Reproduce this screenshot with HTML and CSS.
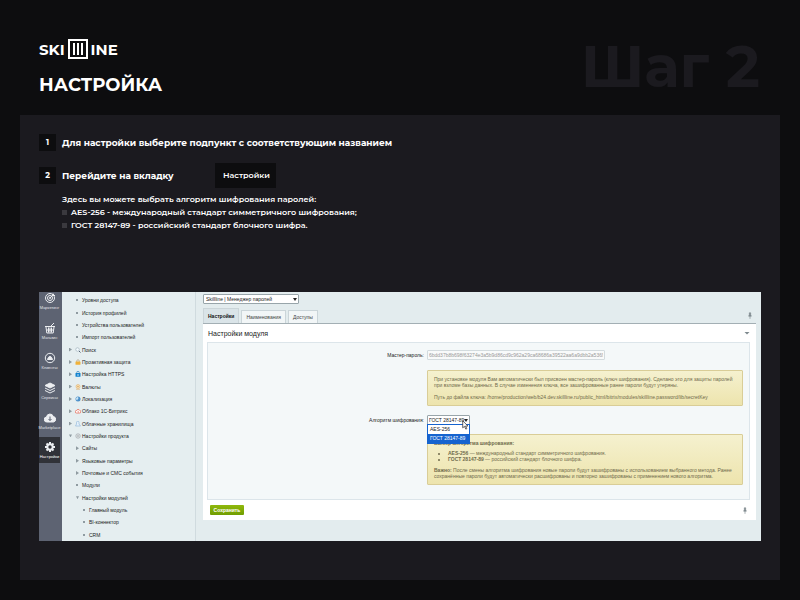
FILE: index.html
```html
<!DOCTYPE html>
<html lang="ru">
<head>
    <meta charset="UTF-8">
    <meta name="viewport" content="width=device-width, initial-scale=1.0">
    <title>Настройка</title>
    <link rel="stylesheet" href="styles.css">
</head>
<body>
    <header class="header">
        <div>
            <div class="logo">
                <span>SKI</span>
                <span class="logo-box"><i></i><i></i><i></i></span>
                <span>INE</span>
            </div>
            <h1>НАСТРОЙКА</h1>
        </div>
        <div class="step-title">Шаг 2</div>
    </header>

    <main class="panel">
        <div class="step">
            <span class="num">1</span>
            <h2>Для настройки выберите подпункт с соответствующим названием</h2>
        </div>
        <div class="step step-tab">
            <span class="num">2</span>
            <h2>Перейдите на вкладку</h2>
            <span class="tab-name">Настройки</span>
        </div>
        <div class="note">
            <p>Здесь вы можете выбрать алгоритм шифрования паролей:</p>
            <ul>
                <li>AES-256 - международный стандарт симметричного шифрования;</li>
                <li>ГОСТ 28147-89 - российский стандарт блочного шифра.</li>
            </ul>
        </div>

        <section class="admin">
            <nav class="rail">
                <a href="#">
                    <svg viewBox="0 0 12 12"><circle cx="6" cy="6" r="4.5"/><circle cx="6" cy="6" r="2.5"/><circle cx="6" cy="6" r="0.6"/><path d="M6 6l4-4M9 1.5v2h2"/></svg>
                    Маркетинг
                </a>
                <a href="#">
                    <svg viewBox="0 0 12 12"><path d="M1 4.5h10M2 5l.8 6h6.4l.8-6M4.5 5.5v5M6 5.5v5M7.5 5.5v5M2.5 8h7M7 4l3-3"/></svg>
                    Магазин
                </a>
                <a href="#">
                    <svg viewBox="0 0 12 12"><circle cx="6" cy="6" r="4.7"/><path class="fill" d="M3.5 7.5c0-1.5 1-1.5 1-1.5a1.5 1.5 0 1 1 3 0s1 0 1 1.5z"/></svg>
                    Клиенты
                </a>
                <a href="#">
                    <svg viewBox="0 0 12 12"><path class="fill" d="M6 1l5 2.5-5 2.5-5-2.5z"/><path d="M1 6l5 2.5 5-2.5M1 8.500l5 2.500 5-2.500"/></svg>
                    Сервисы
                </a>
                <a href="#">
                    <svg viewBox="0 0 12 12"><path class="fill" d="M3 10a2.500 2.500 0 0 1-.5-5 3.500 3.500 0 0 1 6.800-.5A2.800 2.800 0 0 1 9.500 10z"/><path class="dark" d="M6 4.500v4M4.500 7l1.500 1.500 1.500-1.500"/></svg>
                    Marketplace
                </a>
                <a href="#" class="active">
                    <svg viewBox="0 0 12 12"><circle cx="6" cy="6" r="2.7" stroke-width="2"/><path stroke-width="2" d="M6 1v2M6 9v2M1 6h2M9 6h2M2.500 2.500l1.300 1.300M8.200 8.200l1.300 1.300M9.500 2.500l-1.300 1.300M3.800 8.200l-1.300 1.300"/></svg>
                    Настройки
                </a>
            </nav>

            <ul class="tree">
                <li class="sub dot"><a href="#">Уровни доступа</a></li>
                <li class="sub dot"><a href="#">История профилей</a></li>
                <li class="sub dot"><a href="#">Устройства пользователей</a></li>
                <li class="sub dot"><a href="#">Импорт пользователей</a></li>
                <li class="closed"><svg viewBox="0 0 12 12"><circle cx="5" cy="5" r="3.5" fill="#f4fbff" stroke="#8b9cab"/><path d="M8 8l3 3" stroke="#526273" stroke-width="2"/></svg><a href="#">Поиск</a></li>
                <li class="closed"><svg viewBox="0 0 12 12"><path d="M3.5 6V4a2.5 2.5 0 0 1 5 0v2" fill="none" stroke="#b5a58c" stroke-width="1.5"/><rect x="1" y="5" width="10" height="6.5" rx="1" fill="#f0b13a"/></svg><a href="#">Проактивная защита</a></li>
                <li class="closed"><svg viewBox="0 0 12 12"><path d="M3.5 5V3a2.5 2.5 0 0 1 5 0v2" fill="none" stroke="#3d87bd" stroke-width="1.5"/><rect x="1" y="4" width="10" height="7.5" rx="1" fill="#1383cf"/><path d="M6 6v4" stroke="#fff" stroke-width="1.5"/></svg><a href="#">Настройка HTTPS</a></li>
                <li class="closed"><svg viewBox="0 0 12 12"><circle cx="6" cy="5" r="4" fill="#f9e6c0" stroke="#dca555"/><path d="M2 10.500h8M4 5h4M6 3v4" stroke="#d79b48"/></svg><a href="#">Валюты</a></li>
                <li class="closed"><svg viewBox="0 0 12 12"><circle cx="6" cy="6" r="5" fill="#4b8fc9"/><path d="M4 2c3 0 4 2 2 4s-2 3-2 3-2-2-2-4z" fill="#c9e4f4"/></svg><a href="#">Локализация</a></li>
                <li class="closed"><svg viewBox="0 0 12 12"><path d="M3 10a2.5 2.5 0 0 1 0-5 3.5 3.5 0 0 1 6.5 0A2.5 2.5 0 0 1 9 10z" fill="#fff" stroke="#e2614d" stroke-width="1.5"/><path d="M6 5v3h2" stroke="#e2614d" fill="none"/></svg><a href="#">Облако 1С-Битрикс</a></li>
                <li class="closed"><svg viewBox="0 0 12 12"><path d="M1 10l2-4V3a2.5 2.5 0 0 1 5 0v3l3 4z" fill="#e4f1fb" stroke="#7ba7d0"/></svg><a href="#">Облачные хранилища</a></li>
                <li class="open"><svg viewBox="0 0 12 12"><circle cx="6" cy="6" r="4.5" fill="#dfe3e5" stroke="#8d969b"/><circle cx="6" cy="6" r="1.5" fill="#fff" stroke="#8d969b"/></svg><a href="#">Настройки продукта</a></li>
                <li class="sub closed"><a href="#">Сайты</a></li>
                <li class="sub closed"><a href="#">Языковые параметры</a></li>
                <li class="sub closed"><a href="#">Почтовые и СМС события</a></li>
                <li class="sub dot"><a href="#">Модули</a></li>
                <li class="sub open"><a href="#">Настройки модулей</a></li>
                <li class="deep dot"><a href="#">Главный модуль</a></li>
                <li class="deep dot"><a href="#">BI-коннектор</a></li>
                <li class="deep dot"><a href="#">CRM</a></li>
            </ul>

            <div class="work">
                <select class="module-select" aria-label="Модуль">
                    <option>Skillline | Менеджер паролей</option>
                </select>
                <div class="tabs">
                    <button class="tab current">Настройки</button>
                    <button class="tab">Наименования</button>
                    <button class="tab">Доступы</button>
                    <svg class="pin" viewBox="0 0 6 10"><path d="M2 1h2v3l1 2h-4l1-2zM3 6v4"/></svg>
                </div>
                <div class="card">
                    <div class="card-head">
                        <h3>Настройки модуля</h3>
                        <span class="arrow"></span>
                    </div>
                    <form class="form">
                        <label for="master">Мастер-пароль:</label>
                        <input id="master" type="text" value="6bdd37b8b698f63274e3a5b9d86cd9c962a29ca68686a39522aa6a9dbb2a5369" disabled>
                        <div class="info info-key">
                            <p>При установке модуля Вам автоматически был присвоен мастер-пароль (ключ шифрования). Сделано это для защиты паролей при взломе базы данных. В случае изменения ключа, все зашифрованные ранее пароли будут утеряны.</p>
                            <p>Путь до файла ключа: /home/production/web/b24.dev.skillline.ru/public_html/bitrix/modules/skillline.password/lib/secretKey</p>
                        </div>
                        <label for="algo">Алгоритм шифрования:</label>
                        <div class="algo">
                            <select id="algo">
                                <option>AES-256</option>
                                <option selected>ГОСТ 28147-89</option>
                            </select>
                            <ul class="dropdown">
                                <li>AES-256</li>
                                <li class="picked">ГОСТ 28147-89</li>
                            </ul>
                            <svg class="cursor" viewBox="0 0 10 14"><path d="M1 1v10l2.5-2 2 4 1.5-1-2-3.5h3.5z" fill="#fff" stroke="#222"/></svg>
                        </div>
                        <div class="info info-algo">
                            <p><b>Выбор алгоритма шифрования:</b></p>
                            <ul>
                                <li><b>AES-256</b> — международный стандарт симметричного шифрования.</li>
                                <li><b>ГОСТ 28147-89</b> — российский стандарт блочного шифра.</li>
                            </ul>
                            <p><b>Важно:</b> После смены алгоритма шифрования новые пароли будут зашифрованы с использованием выбранного метода. Ранее сохранённые пароли будут автоматически расшифрованы и повторно зашифрованы с применением нового алгоритма.</p>
                        </div>
                    </form>
                    <div class="card-foot">
                        <button class="save">Сохранить</button>
                        <svg class="pin" viewBox="0 0 6 10"><path d="M2 1h2v3l1 2h-4l1-2zM3 6v4"/></svg>
                    </div>
                </div>
            </div>
        </section>
    </main>
</body>
</html>
```

FILE: styles.css
```css
* {
    box-sizing: border-box;
}
body {
    margin: 0;
    padding: 38px 20px 20px;
    min-height: 100vh;
    display: flex;
    flex-direction: column;
    background-color: #0d0d0f;
    color: #fff;
    font-family: Montserrat, Inter, sans-serif;
    font-weight: 700;
}
h1, h2, h3, p, ul {
    margin: 0;
    padding: 0;
}
ul {
    list-style: none;
}
a {
    color: inherit;
    text-decoration: none;
}
.header {
    display: flex;
    justify-content: space-between;
    height: 77px;
    padding: 0 20px 0 19px;
}
.logo {
    display: flex;
    align-items: center;
    gap: 3px;
    height: 22px;
    font-size: 15px;
}
.logo-box {
    display: flex;
    justify-content: center;
    gap: 2px;
    width: 20px;
    height: 20px;
    padding: 2px;
    border: 2px solid #fff;
}
.logo-box i {
    width: 2px;
    background-color: #fff;
}
h1 {
    margin-top: 13px;
    font-size: 18px;
    line-height: 24px;
}
.step-title {
    color: #1b1a1f;
    font-size: 58px;
    line-height: 58px;
}
.panel {
    flex: 1;
    padding: 19px 19px 39px;
    background-color: #1b1a1f;
}
.step {
    display: flex;
    align-items: center;
}
.num {
    width: 17px;
    margin-right: 6px;
    background-color: #0d0d0f;
    font-size: 8px;
    line-height: 17px;
    text-align: center;
}
h2 {
    font-size: 9px;
    line-height: 17px;
}
.step-tab {
    margin-top: 12px;
}
.step-tab h2 {
    width: 153px;
}
.tab-name {
    padding: 0 6px 0 8px;
    background-color: #0d0d0f;
    font-size: 8px;
    font-weight: 600;
    line-height: 25px;
}
.note {
    padding: 5px 0 0 23px;
    font-size: 8px;
    font-weight: 600;
    line-height: 13px;
}
.note li {
    display: flex;
    align-items: center;
    gap: 4px;
}
.note li::before {
    content: "";
    width: 5px;
    height: 5px;
    background-color: #3a393e;
}

/* admin area */
.admin {
    display: grid;
    grid-template-columns: 23px 134px 1fr;
    min-height: 249px;
    margin-top: 60px;
    background-color: #e3ecee;
    color: #222;
    font-family: "Liberation Sans", Arial, sans-serif;
    font-size: 5px;
    font-weight: 400;
}
.admin select, .admin input, .admin button {
    font-family: inherit;
    font-size: 5px;
}
.admin select {
    appearance: none;
    padding: 0 2px;
    border: 1px solid #98a5aa;
    border-radius: 1px;
    background: #fff url("data:image/svg+xml,%3Csvg xmlns='http://www.w3.org/2000/svg' viewBox='0 0 4 3'%3E%3Cpath d='M0 0l2 3 2-3z' fill='%23222'/%3E%3C/svg%3E") no-repeat right 1px center / 4px 3px;
    color: #222;
}
.rail {
    display: flex;
    flex-direction: column;
    background-color: #5d6372;
    color: #e2e4e8;
    font-size: 4px;
}
.rail a {
    display: flex;
    flex-direction: column;
    align-items: center;
    justify-content: center;
    gap: 1px;
    height: 30px;
    margin-right: 2px;
    line-height: 5px;
}
.rail a:first-child {
    justify-content: flex-start;
    height: 24px;
}
.rail svg {
    width: 12px;
    height: 12px;
    fill: none;
    stroke: #eceef1;
}
.rail .fill {
    fill: #eceef1;
}
.rail .dark {
    stroke: #5d6372;
}
.rail .active {
    height: 26px;
    margin-top: 1px;
    background-color: #303238;
    color: #fff;
}
.tree {
    display: flex;
    flex-direction: column;
    padding-top: 2px;
    border-right: 1px solid #d0dbdf;
    background-color: #e5eef0;
}
.tree li {
    flex: 1;
    display: flex;
    align-items: center;
    padding-left: 7px;
    white-space: nowrap;
}
.tree .sub {
    padding-left: 14px;
}
.tree .deep {
    padding-left: 21px;
}
.tree li::before {
    content: "";
    width: 2px;
    height: 2px;
    margin-right: 4px;
    background-color: #8f9ba1;
}
.tree .closed::before {
    clip-path: polygon(0 0, 100% 50%, 0 100%);
    width: 3px;
    height: 4px;
    margin-right: 3px;
}
.tree .open::before {
    clip-path: polygon(0 0, 100% 0, 50% 100%);
    width: 3px;
    height: 3px;
    margin-right: 3px;
}
.tree svg {
    width: 6px;
    height: 6px;
    margin-right: 1px;
}
.work {
    display: flex;
    flex-direction: column;
    align-items: stretch;
    padding: 2px 5px 21px 7px;
}
.module-select {
    align-self: flex-start;
    width: 96px;
    height: 10px;
}
.tabs {
    display: flex;
    align-items: flex-end;
    gap: 2px;
    height: 20px;
    border-bottom: 1px solid #a3afb4;
}
.tab {
    height: 13px;
    padding: 0 4px;
    border: 1px solid #cbd5d9;
    border-bottom: 0;
    background-color: #f2f6f7;
    color: #444;
}
.tab.current {
    height: 15px;
    background-color: #dae4e8;
    color: #111;
    font-weight: 700;
}
.pin {
    width: 4px;
    height: 7px;
    margin-left: auto;
    fill: #7e898e;
    stroke: #7e898e;
}
.tabs .pin {
    margin-right: 4px;
    margin-bottom: 4px;
}
.card {
    flex: 1;
    display: flex;
    flex-direction: column;
    padding: 0 6px 0 4px;
    background-color: #fff;
}
.card-head {
    display: flex;
    align-items: center;
    justify-content: space-between;
    height: 18px;
    padding-left: 1px;
}
.card h3 {
    font-size: 7px;
    font-weight: 400;
}
.arrow {
    width: 6px;
    height: 3px;
    background-color: #7e898e;
    clip-path: polygon(0 0, 100% 0, 50% 100%);
}
.form {
    flex: 1;
    display: grid;
    grid-template-columns: 216px 1fr;
    column-gap: 3px;
    align-content: start;
    padding: 7px 6px 7px 0;
    border: 1px solid #dce5ea;
    background-color: #f4f8f9;
}
.form label {
    text-align: right;
    line-height: 10px;
}
.form input {
    width: 178px;
    height: 10px;
    padding: 0 1px;
    border: 1px solid #d3dbde;
    border-radius: 1px;
    background-color: #f8fafa;
    color: #999;
}
.info {
    grid-column: 2;
    padding: 5px 6px;
    border: 1px solid #d9cd97;
    border-radius: 1px;
    background-image: linear-gradient(#f5f1cf, #ede4ad);
    color: #6f6a4b;
    line-height: 6px;
}
.info-key {
    min-height: 36px;
    margin: 10px 0 9px;
}
.info p + p {
    margin-top: 6px;
}
.algo {
    position: relative;
}
.algo select {
    display: block;
    width: 43px;
    height: 10px;
    padding: 0 1px;
}
.dropdown {
    position: absolute;
    top: 9px;
    left: 0;
    width: 43px;
    border: 1px solid #1563cf;
    background-color: #fff;
    line-height: 9px;
}
.dropdown li {
    padding-left: 2px;
}
.dropdown .picked {
    background-color: #1563cf;
    color: #fff;
}
.cursor {
    position: absolute;
    top: 5px;
    left: 35px;
    width: 7px;
    height: 10px;
}
.info-algo {
    min-height: 51px;
    margin-top: 9px;
}
.info-algo ul {
    padding: 4px 0 5px 14px;
    list-style: disc;
}
.card-foot {
    display: flex;
    align-items: center;
    height: 20px;
    padding: 0 3px;
}
.save {
    width: 34px;
    height: 10px;
    padding: 0;
    border: 0;
    border-radius: 1px;
    background-image: linear-gradient(#8fb80b, #6f9d00);
    color: #fff;
    font-weight: 700;
}
```
